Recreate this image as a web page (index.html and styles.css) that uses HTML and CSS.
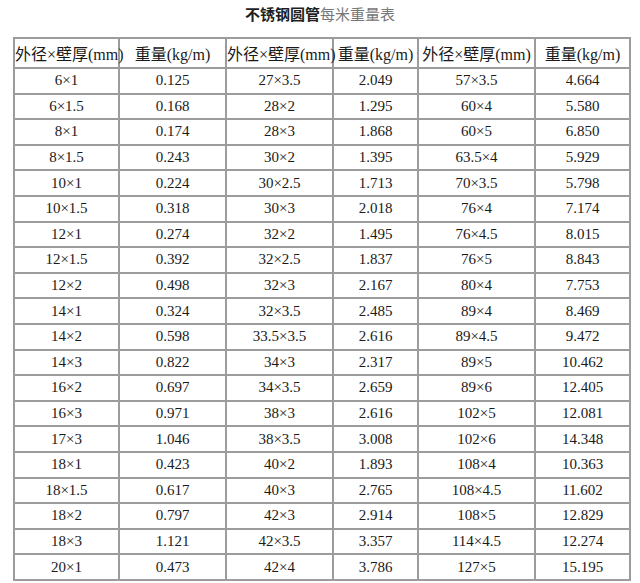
FILE: index.html
```html
<!DOCTYPE html>
<html lang="zh">
<head>
<meta charset="utf-8">
<title>不锈钢圆管每米重量表</title>
<link rel="stylesheet" href="styles.css">
</head>
<body>
<h1 class="title"><span class="title-strong">不锈钢圆管</span><span class="title-light">每米重量表</span></h1>
<table class="weights">
<colgroup>
<col class="c1"><col class="c2"><col class="c3"><col class="c4"><col class="c5"><col class="c6">
</colgroup>
<thead>
<tr class="head"><th>外径×壁厚(mm)</th><th>重量(kg/m)</th><th>外径×壁厚(mm)</th><th>重量(kg/m)</th><th>外径×壁厚(mm)</th><th>重量(kg/m)</th></tr>
</thead>
<tbody>
<tr><td>6×1</td><td>0.125</td><td>27×3.5</td><td>2.049</td><td>57×3.5</td><td>4.664</td></tr>
<tr><td>6×1.5</td><td>0.168</td><td>28×2</td><td>1.295</td><td>60×4</td><td>5.580</td></tr>
<tr><td>8×1</td><td>0.174</td><td>28×3</td><td>1.868</td><td>60×5</td><td>6.850</td></tr>
<tr class="sep"><td>8×1.5</td><td>0.243</td><td>30×2</td><td>1.395</td><td>63.5×4</td><td>5.929</td></tr>
<tr><td>10×1</td><td>0.224</td><td>30×2.5</td><td>1.713</td><td>70×3.5</td><td>5.798</td></tr>
<tr><td>10×1.5</td><td>0.318</td><td>30×3</td><td>2.018</td><td>76×4</td><td>7.174</td></tr>
<tr><td>12×1</td><td>0.274</td><td>32×2</td><td>1.495</td><td>76×4.5</td><td>8.015</td></tr>
<tr><td>12×1.5</td><td>0.392</td><td>32×2.5</td><td>1.837</td><td>76×5</td><td>8.843</td></tr>
<tr><td>12×2</td><td>0.498</td><td>32×3</td><td>2.167</td><td>80×4</td><td>7.753</td></tr>
<tr><td>14×1</td><td>0.324</td><td>32×3.5</td><td>2.485</td><td>89×4</td><td>8.469</td></tr>
<tr><td>14×2</td><td>0.598</td><td>33.5×3.5</td><td>2.616</td><td>89×4.5</td><td>9.472</td></tr>
<tr><td>14×3</td><td>0.822</td><td>34×3</td><td>2.317</td><td>89×5</td><td>10.462</td></tr>
<tr class="sep"><td>16×2</td><td>0.697</td><td>34×3.5</td><td>2.659</td><td>89×6</td><td>12.405</td></tr>
<tr><td>16×3</td><td>0.971</td><td>38×3</td><td>2.616</td><td>102×5</td><td>12.081</td></tr>
<tr><td>17×3</td><td>1.046</td><td>38×3.5</td><td>3.008</td><td>102×6</td><td>14.348</td></tr>
<tr><td>18×1</td><td>0.423</td><td>40×2</td><td>1.893</td><td>108×4</td><td>10.363</td></tr>
<tr><td>18×1.5</td><td>0.617</td><td>40×3</td><td>2.765</td><td>108×4.5</td><td>11.602</td></tr>
<tr><td>18×2</td><td>0.797</td><td>42×3</td><td>2.914</td><td>108×5</td><td>12.829</td></tr>
<tr><td>18×3</td><td>1.121</td><td>42×3.5</td><td>3.357</td><td>114×4.5</td><td>12.274</td></tr>
<tr><td>20×1</td><td>0.473</td><td>42×4</td><td>3.786</td><td>127×5</td><td>15.195</td></tr>
</tbody>
</table>
</body>
</html>
```
FILE: styles.css
```css
html, body {
  margin: 0;
  padding: 0;
  background: #ffffff;
}
body {
  width: 640px;
  height: 583px;
  overflow: hidden;
}
.title {
  margin: 0;
  height: 37px;
  padding-top: 5px;
  box-sizing: border-box;
  text-align: center;
  font-family: "Noto Sans CJK SC", "Noto Sans", sans-serif;
  font-size: 15px;
  line-height: 18px;
  font-weight: normal;
}
.title-strong {
  font-weight: bold;
  color: #1e1e1e;
}
.title-light {
  color: #777777;
}
.weights {
  margin-left: 13px;
  border-collapse: collapse;
  table-layout: fixed;
  width: 618px;
  font-family: "Liberation Serif", "Noto Sans CJK SC", serif;
  font-size: 15px;
  color: #1a1a1a;
}
.c1 { width: 105px; }
.c2 { width: 107px; }
.c3 { width: 107px; }
.c4 { width: 85px; }
.c5 { width: 117px; }
.c6 { width: 95px; }
.weights th,
.weights td {
  border: 2px solid #9c9c9c;
  padding: 0;
  text-align: center;
  vertical-align: middle;
  white-space: nowrap;
  overflow: visible;
}
.weights th {
  font-weight: normal;
  height: 28px;
  font-size: 16px;
}
.weights td {
  height: 23.6px;
}
.weights tr.sep td {
  border-top-color: #888888;
}
```
